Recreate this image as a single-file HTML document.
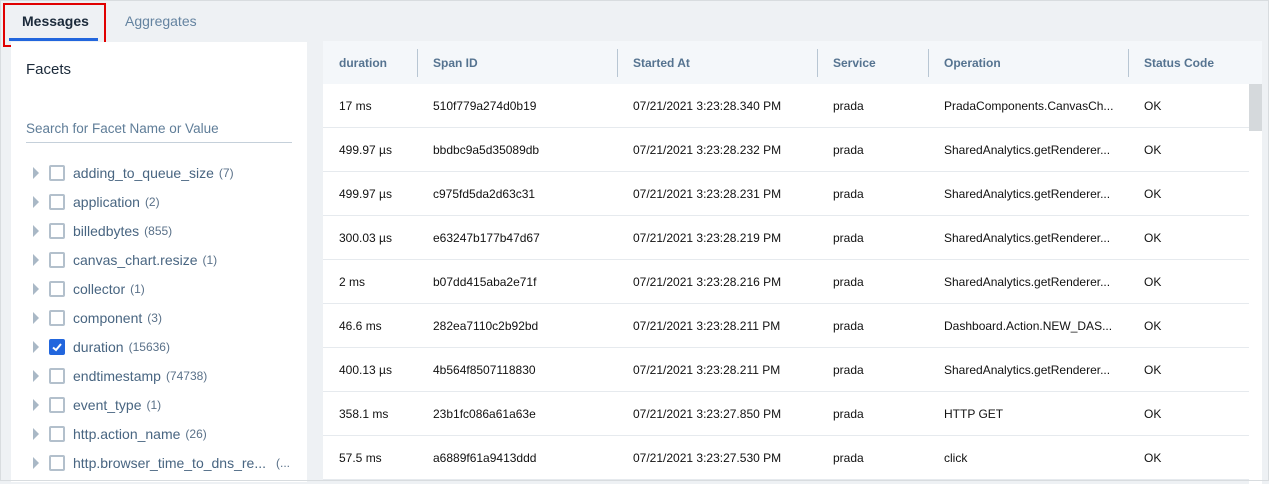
<!DOCTYPE html>
<html><head><style>
*{box-sizing:border-box;margin:0;padding:0}
body{width:1269px;height:481px;overflow:hidden;background:#eef1f4;font-family:"Liberation Sans",sans-serif;position:relative;}
.frame{position:absolute;left:0;top:0;width:1269px;height:481px;border:1px solid #d8dcdf;pointer-events:none;z-index:5}
.tab{position:absolute;top:13px;font-size:14px}
.red{position:absolute;left:3px;top:3px;width:103px;height:44px;border:2px solid #e00000}
.ul{position:absolute;left:9px;top:38px;width:89px;height:3px;background:#2266dd}
.left{position:absolute;left:11px;top:42px;width:296px;height:440px;background:#fff}
.facet{position:absolute;left:15px;font-size:15px;color:#1b2a3a}
.search{position:absolute;left:15px;top:78px;width:266px;height:23px;border-bottom:1px solid #c5d0da;font-size:13.5px;color:#5f7d98}
.row{position:absolute;left:22px;height:20px;font-size:14px;color:#486581;display:flex;align-items:center}
.tri{width:0;height:0;border-left:6px solid #a9b8c6;border-top:6px solid transparent;border-bottom:6px solid transparent;margin-right:10px}
.cb{width:16px;height:16px;border:2px solid #b3c0cc;border-radius:2px;margin-right:8px;position:relative}
.cb.on{background:#2266dd;border-color:#2266dd}
.cnt{font-size:12px;margin-left:5px;color:#5a7189}
.tbl{position:absolute;left:323px;top:41px;width:939px;height:440px;background:#fff}
.hd{position:absolute;left:0;top:0;width:939px;height:43px;background:#f4f7fa}
.h{position:absolute;top:15px;font-size:12px;font-weight:bold;color:#557390}
.sep{position:absolute;top:8px;width:1px;height:28px;background:#b8c6d3}
.tr{position:absolute;left:0;width:926px;height:44px;border-bottom:1px solid #e6eaee;font-size:12px;color:#111}
.tr span{position:absolute;top:15px}
.sb{position:absolute;left:926px;top:43px;width:13px;height:400px;background:#fff}
.th{position:absolute;left:926px;top:43px;width:13px;height:47px;background:#d5d9dc}
</style></head><body>
<div class="frame"></div>
<div class="tab" style="left:22px;color:#1b2a3a;font-weight:bold">Messages</div>
<div class="tab" style="left:125px;color:#6483a0">Aggregates</div>
<div class="ul"></div>
<div class="red"></div>
<div class="left">
<div class="facet" style="top:19px">Facets</div>
<div class="search" style="padding-top:1px">Search for Facet Name or Value</div>
<div class="row" style="top:121px"><div class="tri"></div><div class="cb"></div>adding_to_queue_size<span class="cnt">(7)</span></div>
<div class="row" style="top:150px"><div class="tri"></div><div class="cb"></div>application<span class="cnt">(2)</span></div>
<div class="row" style="top:179px"><div class="tri"></div><div class="cb"></div>billedbytes<span class="cnt">(855)</span></div>
<div class="row" style="top:208px"><div class="tri"></div><div class="cb"></div>canvas_chart.resize<span class="cnt">(1)</span></div>
<div class="row" style="top:237px"><div class="tri"></div><div class="cb"></div>collector<span class="cnt">(1)</span></div>
<div class="row" style="top:266px"><div class="tri"></div><div class="cb"></div>component<span class="cnt">(3)</span></div>
<div class="row" style="top:295px"><div class="tri"></div><div class="cb on"><svg width="12" height="12" style="position:absolute;left:0;top:0" viewBox="0 0 12 12"><path d="M2 6.5L5 9L10 3" stroke="#fff" stroke-width="2" fill="none"/></svg></div>duration<span class="cnt">(15636)</span></div>
<div class="row" style="top:324px"><div class="tri"></div><div class="cb"></div>endtimestamp<span class="cnt">(74738)</span></div>
<div class="row" style="top:353px"><div class="tri"></div><div class="cb"></div>event_type<span class="cnt">(1)</span></div>
<div class="row" style="top:382px"><div class="tri"></div><div class="cb"></div>http.action_name<span class="cnt">(26)</span></div>
<div class="row" style="top:411px"><div class="tri"></div><div class="cb"></div>http.browser_time_to_dns_re...<span class="cnt" style="margin-left:10px">(...</span></div>
</div>
<div class="tbl">
<div class="hd">
<span class="h" style="left:16px">duration</span><div class="sep" style="left:94px"></div>
<span class="h" style="left:110px">Span ID</span><div class="sep" style="left:294px"></div>
<span class="h" style="left:310px">Started At</span><div class="sep" style="left:494px"></div>
<span class="h" style="left:510px">Service</span><div class="sep" style="left:605px"></div>
<span class="h" style="left:621px">Operation</span><div class="sep" style="left:805px"></div>
<span class="h" style="left:821px">Status Code</span>
</div>
<div class="tr" style="top:43px"><span style="left:16px">17 ms</span><span style="left:110px">510f779a274d0b19</span><span style="left:310px">07/21/2021 3:23:28.340 PM</span><span style="left:510px">prada</span><span style="left:621px">PradaComponents.CanvasCh...</span><span style="left:821px">OK</span></div>
<div class="tr" style="top:87px"><span style="left:16px">499.97 µs</span><span style="left:110px">bbdbc9a5d35089db</span><span style="left:310px">07/21/2021 3:23:28.232 PM</span><span style="left:510px">prada</span><span style="left:621px">SharedAnalytics.getRenderer...</span><span style="left:821px">OK</span></div>
<div class="tr" style="top:131px"><span style="left:16px">499.97 µs</span><span style="left:110px">c975fd5da2d63c31</span><span style="left:310px">07/21/2021 3:23:28.231 PM</span><span style="left:510px">prada</span><span style="left:621px">SharedAnalytics.getRenderer...</span><span style="left:821px">OK</span></div>
<div class="tr" style="top:175px"><span style="left:16px">300.03 µs</span><span style="left:110px">e63247b177b47d67</span><span style="left:310px">07/21/2021 3:23:28.219 PM</span><span style="left:510px">prada</span><span style="left:621px">SharedAnalytics.getRenderer...</span><span style="left:821px">OK</span></div>
<div class="tr" style="top:219px"><span style="left:16px">2 ms</span><span style="left:110px">b07dd415aba2e71f</span><span style="left:310px">07/21/2021 3:23:28.216 PM</span><span style="left:510px">prada</span><span style="left:621px">SharedAnalytics.getRenderer...</span><span style="left:821px">OK</span></div>
<div class="tr" style="top:263px"><span style="left:16px">46.6 ms</span><span style="left:110px">282ea7110c2b92bd</span><span style="left:310px">07/21/2021 3:23:28.211 PM</span><span style="left:510px">prada</span><span style="left:621px">Dashboard.Action.NEW_DAS...</span><span style="left:821px">OK</span></div>
<div class="tr" style="top:307px"><span style="left:16px">400.13 µs</span><span style="left:110px">4b564f8507118830</span><span style="left:310px">07/21/2021 3:23:28.211 PM</span><span style="left:510px">prada</span><span style="left:621px">SharedAnalytics.getRenderer...</span><span style="left:821px">OK</span></div>
<div class="tr" style="top:351px"><span style="left:16px">358.1 ms</span><span style="left:110px">23b1fc086a61a63e</span><span style="left:310px">07/21/2021 3:23:27.850 PM</span><span style="left:510px">prada</span><span style="left:621px">HTTP GET</span><span style="left:821px">OK</span></div>
<div class="tr" style="top:395px"><span style="left:16px">57.5 ms</span><span style="left:110px">a6889f61a9413ddd</span><span style="left:310px">07/21/2021 3:23:27.530 PM</span><span style="left:510px">prada</span><span style="left:621px">click</span><span style="left:821px">OK</span></div>
<div class="sb"></div><div class="th"></div>
</div>
</body></html>
